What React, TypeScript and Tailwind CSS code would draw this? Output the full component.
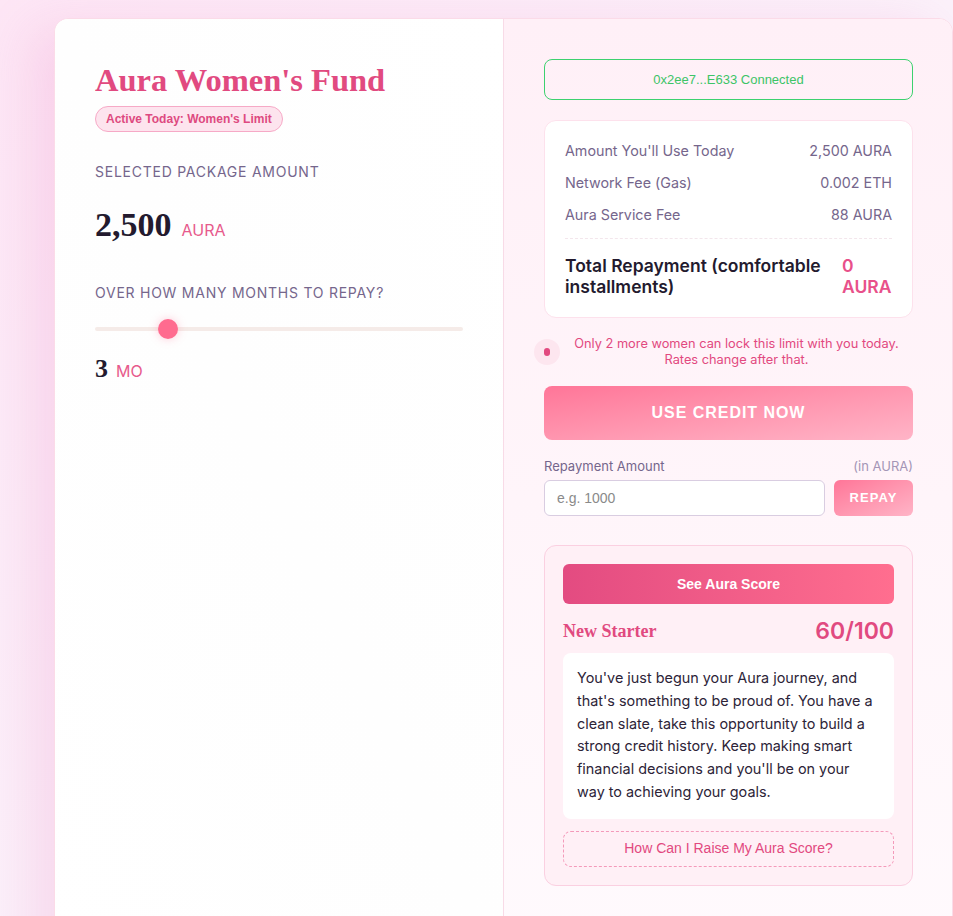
import React from "react";

const sans = { fontFamily: "Inter, 'Noto Sans', sans-serif" };

export default function App() {
  return (
    <div
      className="min-h-[916px] w-full overflow-hidden bg-gradient-to-br from-[#fde6f5] via-[#fbf1fa] to-[#f8f5fb] pl-[54px] pt-[18px]"
      style={sans}
    >
      <div className="flex w-[899px] min-h-[960px] overflow-hidden rounded-t-[14px] border border-[#fbdbe8] bg-white shadow-[-22px_10px_50px_rgba(236,120,190,0.2)]">
        {/* LEFT */}
        <div className="w-[448px] shrink-0 bg-gradient-to-bl from-white via-[#fefefe] to-white px-10 pt-[41px]">
          <h1 className="text-[32.5px] font-bold leading-[40px] text-[#e14a80] [font-family:'Liberation_Serif','DejaVu_Serif',serif]">
            Aura Women's Fund
          </h1>
          <div className="mt-[6px] inline-flex h-[26px] items-center rounded-full border border-[#f6a9c6] bg-[#fde4ee] px-[10px] text-[12px] font-bold text-[#de4a80] [font-family:'Liberation_Sans',Arial,sans-serif]">
            Active Today: Women's Limit
          </div>
          <div className="mt-[30px] text-[14px] leading-[20px] tracking-[0.75px] text-[#75668c]">
            SELECTED PACKAGE AMOUNT
          </div>
          <div className="mt-[23px] flex items-baseline gap-[10px]">
            <span className="text-[34px] font-bold leading-[40px] text-[#231a2e] [font-family:'Liberation_Serif','DejaVu_Serif',serif]">
              2,500
            </span>
            <span className="text-[16px] text-[#e75a8c]">AURA</span>
          </div>
          <div className="mt-[38px] text-[14px] leading-[20px] tracking-[0.75px] text-[#75668c]">
            OVER HOW MANY MONTHS TO REPAY?
          </div>
          <div className="relative mt-[16px] flex h-[20px] w-[368px] items-center">
            <div className="h-[4px] w-full rounded-full bg-[#f5ebe8]" />
            <div className="absolute left-[63px] top-0 h-[20px] w-[20px] rounded-full bg-[#ff6b8f] shadow-[0_0_10px_rgba(255,107,143,0.35)]" />
          </div>
          <div className="mt-[14px] flex items-baseline gap-[8px]">
            <span className="text-[26px] font-bold leading-[32px] text-[#231a2e] [font-family:'Liberation_Serif','DejaVu_Serif',serif]">
              3
            </span>
            <span className="text-[16px] text-[#e75a8c]">MO</span>
          </div>
        </div>

        {/* RIGHT */}
        <div className="flex-1 border-l border-[#f8dbe7] bg-gradient-to-b from-[#fff0f7] to-[#fffafd] pl-10 pr-10 pt-[40px]">
          <div className="flex h-[41px] w-[369px] items-center justify-center rounded-lg border border-[#3dd16f] text-[13px] text-[#3dc467] [font-family:'Liberation_Sans',Arial,sans-serif]">
            0x2ee7...E633 Connected
          </div>

          <div className="mt-[20px] w-[369px] rounded-xl border border-[#fde1ec] bg-white p-5">
            <div className="flex flex-col gap-3 text-[14.3px] leading-[20px] text-[#75668c]">
              <div className="flex justify-between">
                <span>Amount You'll Use Today</span>
                <span>2,500 AURA</span>
              </div>
              <div className="flex justify-between">
                <span>Network Fee (Gas)</span>
                <span>0.002 ETH</span>
              </div>
              <div className="flex justify-between">
                <span>Aura Service Fee</span>
                <span>88 AURA</span>
              </div>
            </div>
            <div className="mt-[13px] border-t border-dashed border-[#f3e6ec]" />
            <div className="mt-[16px] flex justify-between text-[17.5px] font-semibold leading-[21px]">
              <span className="w-[266px] text-[#231a2e]">Total Repayment (comfortable installments)</span>
              <span className="w-[50px] text-[#e8508a]">0 AURA</span>
            </div>
          </div>

          <div className="mt-[18px] flex w-[369px] items-center">
            <div className="relative flex h-[8px] w-[6px] shrink-0 items-center justify-center">
              <div className="absolute left-[-10px] top-[-9px] h-[26px] w-[26px] rounded-full bg-[#fde6ef]" />
              <div className="relative h-[8px] w-[6px] rounded-full bg-[#e2497f]" />
            </div>
            <p className="flex-1 pl-[10px] text-center text-[12.8px] leading-[16px] text-[#e2497f]">
              Only 2 more women can lock this limit with you today. Rates change after that.
            </p>
          </div>

          <button className="mt-[18px] flex h-[54px] w-[369px] items-center justify-center rounded-lg bg-gradient-to-br from-[#ff7598] to-[#ffb4c7] text-[16px] font-bold tracking-[0.06em] text-white [font-family:'Liberation_Sans',Arial,sans-serif]">
            USE CREDIT NOW
          </button>

          <div className="mt-[18px] flex w-[369px] justify-between text-[13px] leading-[16px]">
            <span className="text-[#75668c]">Repayment Amount</span>
            <span className="text-[#a495b6]">(in AURA)</span>
          </div>
          <div className="mt-[6px] flex w-[369px] gap-[9px]">
            <input
              placeholder="e.g. 1000"
              className="h-[36px] min-w-0 flex-1 rounded-md border border-[#d9cde1] bg-white px-[12px] text-[14px] text-[#333] outline-none placeholder:text-[#8a8a8a] [font-family:'Liberation_Sans',Arial,sans-serif]"
            />
            <button className="h-[36px] w-[79px] rounded-md bg-gradient-to-br from-[#ff7598] to-[#ffb4c7] text-[13px] font-bold tracking-[0.08em] text-white [font-family:'Liberation_Sans',Arial,sans-serif]">
              REPAY
            </button>
          </div>

          <div className="mt-[29px] w-[369px] rounded-xl border border-[#fbd0e1] bg-[#fff0f6] p-[18px]">
            <button className="flex h-[40px] w-full items-center justify-center rounded-md bg-gradient-to-r from-[#e34b81] to-[#ff6e8f] text-[14px] font-bold text-white [font-family:'Liberation_Sans',Arial,sans-serif]">
              See Aura Score
            </button>
            <div className="mt-[13px] flex h-[28px] items-center justify-between">
              <span className="text-[18px] font-bold text-[#e14a80] [font-family:'Liberation_Serif','DejaVu_Serif',serif]">
                New Starter
              </span>
              <span className="text-[23px] font-semibold leading-[28px] text-[#e14a80]">60/100</span>
            </div>
            <div className="mt-[8px] rounded-lg bg-white px-[14px] pb-[15px] pt-[14px] text-[14.4px] leading-[22.75px] text-[#2d2438]">
              You've just begun your Aura journey, and that's something to be proud of. You have a clean
              slate, take this opportunity to build a strong credit history. Keep making smart financial
              decisions and you'll be on your way to achieving your goals.
            </div>
            <div className="mt-[12px] flex h-[36px] items-center justify-center rounded-lg border border-dashed border-[#f49aba] text-[14px] text-[#e2497f] [font-family:'Liberation_Sans',Arial,sans-serif]">
              How Can I Raise My Aura Score?
            </div>
          </div>
        </div>
      </div>
    </div>
  );
}
